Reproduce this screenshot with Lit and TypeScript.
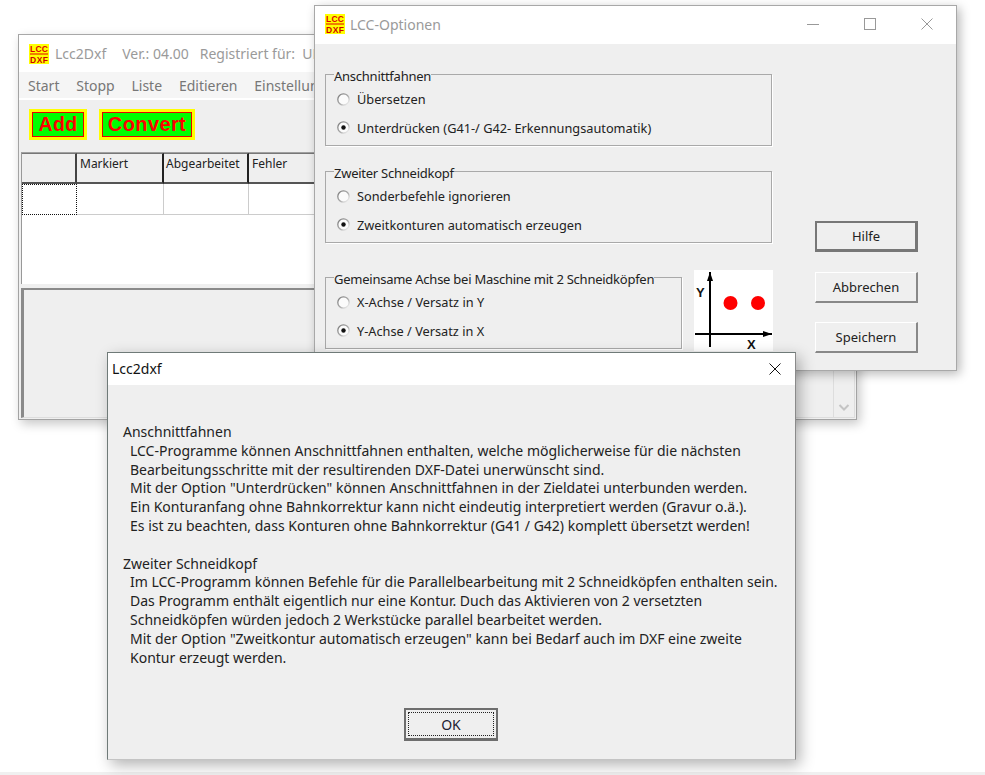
import { LitElement, html, css, svg } from "lit";
import { customElement } from "lit/decorators.js";

const logo = html`<svg class="logo" viewBox="0 0 20 20" width="20" height="20">
  <rect width="20" height="20" fill="#ffff00"/>
  <rect x="1" y="9.5" width="18" height="1" fill="#e00000"/>
  <text x="10" y="8" text-anchor="middle" textLength="18" font-family="Liberation Sans" font-weight="700" font-size="8.500" fill="#e00000">LCC</text>
  <text x="10" y="18.500" text-anchor="middle" textLength="18" font-family="Liberation Sans" font-weight="700" font-size="8.500" fill="#d00000">DXF</text>
</svg>`;

const closeIcon = (c: string) => html`<svg width="12" height="12" viewBox="0 0 12 12"><path d="M0.5 0.5L11.5 11.5M11.5 0.5L0.5 11.5" stroke="${c}" stroke-width="1" fill="none"/></svg>`;

const radio = (on: boolean) => html`<svg class="radio" width="13" height="13" viewBox="0 0 13 13">
  <defs><linearGradient id="rg" x1="0" y1="0" x2="1" y2="1"><stop offset="0" stop-color="#777"/><stop offset=".55" stop-color="#aaa"/><stop offset="1" stop-color="#fff"/></linearGradient></defs>
  <circle cx="6.5" cy="6.5" r="5.7" fill="#fbfbfb" stroke="url(#rg)" stroke-width="1.3"/>
  ${on ? svg`<circle cx="6.5" cy="6.5" r="2.2" fill="#111"/>` : ""}
</svg>`;

const axes = html`<svg class="axes" width="79" height="81" viewBox="0 0 79 81">
  <rect width="79" height="81" fill="#fff"/>
  <path d="M16 2V77M1 64H78" stroke="#000" stroke-width="2" fill="none"/>
  <path d="M16 2L13 11H19ZM78 64L69 61V67Z" fill="#000"/>
  <circle cx="36.500" cy="33" r="7" fill="#ff0000"/>
  <circle cx="64" cy="33" r="7" fill="#ff0000"/>
  <text x="2" y="27" font-family="Liberation Sans" font-weight="700" font-size="13" fill="#111">Y</text>
  <text x="53" y="79" font-family="Liberation Sans" font-weight="700" font-size="13" fill="#111">X</text>
</svg>`;

const para1 = [
  "LCC-Programme können Anschnittfahnen enthalten, welche möglicherweise für die nächsten",
  "Bearbeitungsschritte mit der resultirenden DXF-Datei unerwünscht sind.",
  'Mit der Option "Unterdrücken" können Anschnittfahnen in der Zieldatei unterbunden werden.',
  "Ein Konturanfang ohne Bahnkorrektur kann nicht eindeutig interpretiert werden (Gravur o.ä.).",
  "Es ist zu beachten, dass Konturen ohne Bahnkorrektur (G41 / G42) komplett übersetzt werden!",
];
const para2 = [
  "Im LCC-Programm können Befehle für die Parallelbearbeitung mit 2 Schneidköpfen enthalten sein.",
  "Das Programm enthält eigentlich nur eine Kontur. Duch das Aktivieren von 2 versetzten",
  "Schneidköpfen würden jedoch 2 Werkstücke parallel bearbeitet werden.",
  'Mit der Option "Zweitkontur automatisch erzeugen" kann bei Bedarf auch im DXF eine zweite',
  "Kontur erzeugt werden.",
];

@customElement("app-root")
export class AppRoot extends LitElement {
  static styles = css`
    :host { display: flex; flex-direction: column; width: 985px; height: 775px; overflow: hidden; background: #fff;
      font-family: "Noto Sans", sans-serif; font-size: 13px; color: #222; }
    * { box-sizing: border-box; }
    .desk { position: relative; flex: 1; }
    .strip { height: 3px; background: #f0f0f0; }
    .win { position: absolute; background: #efefef; overflow: hidden; display: flex; flex-direction: column; }
    .main { left: 18px; top: 34px; width: 839px; height: 386px; border: 1px solid #a3a3a3; border-top-color: #a8a8a8; box-shadow: 3px 4px 10px rgba(0,0,0,.22); }
    .opts { left: 314px; top: 5px; width: 643px; height: 366px; border: 1px solid #a8a8a8; box-shadow: 3px 3px 10px rgba(0,0,0,.28); }
    .dlg { left: 107px; top: 352px; width: 689px; height: 408px; border: 1px solid #6f7a78; border-bottom-color: #c4c4c4; border-right-color: #8a8a8a; box-shadow: 4px 5px 14px rgba(0,0,0,.3); }

    .title { display: flex; align-items: center; background: #fff; flex: none; color: #9a9a9a; font-size: 14px; white-space: nowrap; }
    .logo { flex: none; }
    .main .title { height: 37px; padding-left: 10px; gap: 6px; }
    .main .title span { margin-right: 10px; }
    .main .title span.ver { margin-right: 5px; }
    .menu { display: flex; background: #f5f5f5; align-items: center; padding-left: 9px; color: #777; font-size: 14px; white-space: nowrap; border-bottom: 2px solid #fff; flex: none; height: 28px; }
    .menu span { margin-right: 16.8px; }
    .tools { display: flex; gap: 12px; padding: 9px 10px 0; height: 52px; flex: none; }
    .tb { height: 31px; border: 3px solid #ffff00; background: #00ff00; box-shadow: inset 0 0 0 1px #e80000; color: #ff0000; font: 700 20px/25px "Liberation Sans", sans-serif; display: flex; align-items: center; justify-content: center; letter-spacing: .4px; }
    .tb.add { width: 58px; font-size: 19.5px; }
    .tb.conv { width: 96px; }
    .gridwrap { margin-left: 2px; height: 132px; background: #fff; border-top: 1px solid #a0a0a0; border-left: 1px solid #999; flex: none; }
    .grow { display: grid; grid-template-columns: 55px 87px 85px 1fr; }
    .hc { height: 31px; background: #efefef; border-right: 2px solid #222; border-bottom: 2px solid #555; border-top: 1px solid #777; padding: 1px 0 0 3px; font-size: 12px; color: #222; white-space: nowrap; }
    .hc:nth-child(3) { padding-left: 2px; }
    .hc:first-child { border-right-color: #444; }
    .hc:last-child { border-right: 0; }
    .rc { height: 31px; border-right: 1px solid #ccc; border-bottom: 1px solid #ccc; }
    .rc.focus { border: 1px dotted #111; }
    .lower { flex: 1; margin: 4px 1px 1px 2px; border-top: 2px solid #8a8a8a; border-left: 3px solid #8a8a8a; border-bottom: 1px solid #ddd; border-right: 1px solid #ddd; background: #efefef; display: flex; justify-content: flex-end; }
    .sb { width: 21px; border-left: 1px solid #ddd; display: flex; align-items: flex-end; justify-content: center; padding-bottom: 6px; }

    .opts .title { height: 38px; padding: 0 0 2px 10px; gap: 5px; }
    .caps { margin-left: auto; display: flex; align-items: center; padding-right: 23px; gap: 45px; }
    .min { width: 12px; height: 1px; background: #999; }
    .max { width: 12px; height: 12px; border: 1px solid #999; }
    .obody { display: flex; padding: 21px 0 0 10px; }
    .left { width: 448px; display: flex; flex-direction: column; }
    fieldset { margin: 0; padding: 0 11px; border: 1px solid #a9a9a9; box-shadow: 1px 1px 0 #fff; min-width: 0; height: 81px; width: 447px; display: block; }
    legend { padding: 0; margin-left: -3px; font-size: 13px; line-height: 22px; height: 18px; color: #222; white-space: nowrap; letter-spacing: -.25px; }
    .r { display: flex; align-items: center; gap: 7px; height: 28px; font-size: 12.75px; color: #222; white-space: nowrap; }
    .r.first { margin-top: 2px; }
    .r + .r { margin-top: .8px; }
    .gap1 { margin-top: 16px; }
    .row3 { display: flex; align-items: flex-start; margin-top: 25px; gap: 12px; width: 448px; }
    .row3 fieldset { width: 357px; flex: none; }
    .axes { display: block; flex: none; margin-top: 2px; }
    .btns { margin-left: 42px; padding-top: 156px; display: flex; flex-direction: column; gap: 19.5px; }
    .btn { width: 103px; height: 31px; display: flex; align-items: center; justify-content: center; background: #efefef; border: 1px solid #fff; border-right: 2px solid #888; border-bottom: 2px solid #888; font-size: 13px; color: #222; }
    .btn.def { border: 2px solid #777; border-right-width: 3px; border-bottom-width: 3px; }

    .dlg .title { height: 32px; color: #111; padding: 0 14px 1px 4px; flex: none; font-size: 14px; justify-content: space-between; }
    .dbody { flex: 1; display: flex; flex-direction: column; padding: 38px 10px 18px 15px; font-size: 14px; color: #222; }
    .line { height: 18.8px; line-height: 18.8px; white-space: nowrap; }
    .ind { padding-left: 7px; }
    .sp { height: 18.8px; }
    .ok { margin: auto 0 0 281px; width: 94px; height: 33px; border: 2px solid #6e6e6e; border-bottom-width: 3px; background: #efefef; padding: 2px; flex: none; }
    .ok div { height: 100%; border: 1px dotted #222; display: flex; align-items: center; justify-content: center; font-size: 14px; color: #223; }
  `;

  render() {
    return html`
      <div class="desk">
        <div class="win main">
          <div class="title">${logo}<span>Lcc2Dxf</span><span class="ver">Ver.: 04.00</span><span>Registriert für:&nbsp; UNREGISTRIERT</span></div>
          <div class="menu"><span>Start</span><span>Stopp</span><span>Liste</span><span>Editieren</span><span>Einstellungen</span></div>
          <div class="tools"><div class="tb add">Add</div><div class="tb conv">Convert</div></div>
          <div class="gridwrap">
            <div class="grow"><div class="hc"></div><div class="hc">Markiert</div><div class="hc">Abgearbeitet</div><div class="hc">Fehler</div></div>
            <div class="grow"><div class="rc focus"></div><div class="rc"></div><div class="rc"></div><div class="rc"></div></div>
          </div>
          <div class="lower"><div class="sb"><svg width="12" height="7" viewBox="0 0 12 7"><path d="M1.500 1L6 5.500L10.500 1" stroke="#c4c4c4" stroke-width="2" fill="none"/></svg></div></div>
        </div>

        <div class="win opts">
          <div class="title">${logo}<span>LCC-Optionen</span>
            <div class="caps"><div class="min"></div><div class="max"></div>${closeIcon("#999")}</div>
          </div>
          <div class="obody">
            <div class="left">
              <fieldset><legend>Anschnittfahnen</legend>
                <div class="r first">${radio(false)}Übersetzen</div>
                <div class="r">${radio(true)}Unterdrücken (G41-/ G42- Erkennungsautomatik)</div>
              </fieldset>
              <fieldset class="gap1"><legend>Zweiter Schneidkopf</legend>
                <div class="r first">${radio(false)}Sonderbefehle ignorieren</div>
                <div class="r">${radio(true)}Zweitkonturen automatisch erzeugen</div>
              </fieldset>
              <div class="row3">
                <fieldset><legend>Gemeinsame Achse bei Maschine mit 2 Schneidköpfen</legend>
                  <div class="r first">${radio(false)}X-Achse / Versatz in Y</div>
                  <div class="r">${radio(true)}Y-Achse / Versatz in X</div>
                </fieldset>
                ${axes}
              </div>
            </div>
            <div class="btns">
              <div class="btn def">Hilfe</div><div class="btn">Abbrechen</div><div class="btn">Speichern</div>
            </div>
          </div>
        </div>

        <div class="win dlg">
          <div class="title"><span>Lcc2dxf</span>${closeIcon("#111")}</div>
          <div class="dbody">
            <div class="line">Anschnittfahnen</div>
            ${para1.map((t) => html`<div class="line ind">${t}</div>`)}
            <div class="sp"></div>
            <div class="line">Zweiter Schneidkopf</div>
            ${para2.map((t) => html`<div class="line ind">${t}</div>`)}
            <div class="ok"><div>OK</div></div>
          </div>
        </div>
      </div>
      <div class="strip"></div>
    `;
  }
}
